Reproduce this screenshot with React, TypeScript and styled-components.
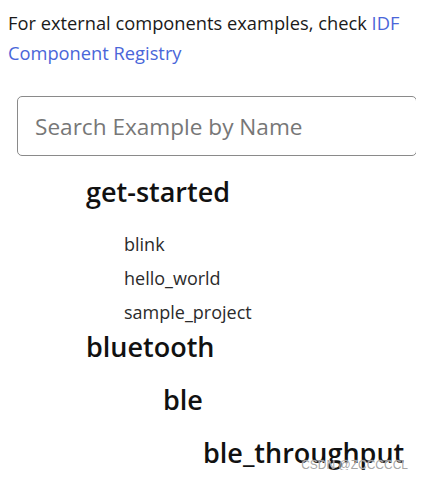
import * as React from 'react';
import styled, { createGlobalStyle } from 'styled-components';

const GlobalStyle = createGlobalStyle`
    html, body {
        margin: 0;
        padding: 0;
        background: #ffffff;
    }
    body {
        margin: 8px;
        font-family: 'Open Sans', 'Noto Sans', sans-serif;
        color: #1a1a1a;
    }
`;

const Page = styled.div`
    position: relative;
    height: 462px;
`;

const Intro = styled.p`
    margin: 0;
    font-size: 18.3px;
    line-height: 30px;
    color: #1a1a1a;
`;

const RegistryLink = styled.a`
    color: #4a66d9;
    text-decoration: none;
`;

const SearchInput = styled.input`
    display: block;
    box-sizing: border-box;
    margin: 28px 0 0 9px;
    width: 400px;
    height: 60px;
    padding: 0 17px;
    border: 1px solid #8a8a8a;
    border-radius: 5px;
    font-family: 'Open Sans', 'Noto Sans', sans-serif;
    font-size: 22.6px;
    color: #333;
    outline: none;

    &::placeholder {
        color: #777;
    }
`;

const Tree = styled.div`
    margin-top: 18px;
`;

const GroupTitle = styled.h3<{ $indent: number }>`
    margin: 0 0 17px;
    padding-left: ${p => p.$indent}px;
    font-size: 27px;
    line-height: 36px;
    font-weight: 600;
    color: #111;
`;

const ExampleList = styled.ul<{ $indent: number }>`
    list-style: none;
    margin: 0;
    padding-left: ${p => p.$indent}px;
`;

const ExampleItem = styled.li`
    font-size: 18px;
    line-height: 34px;
    color: #2b2b2b;
`;

// csdn watermark sitting over the last heading
const Watermark = styled.span`
    position: absolute;
    right: 8px;
    bottom: -2px;
    font-family: 'Liberation Sans', Arial, sans-serif;
    font-size: 12px;
    color: rgba(150, 150, 150, 0.85);
    text-shadow: 0 0 1px #fff;
`;

export default function App() {
    return (
        <Page>
            <GlobalStyle />
            <Intro>
                For external components examples, check <RegistryLink href="#">IDF Component Registry</RegistryLink>
            </Intro>
            <SearchInput placeholder="Search Example by Name" />
            <Tree>
                <GroupTitle $indent={78}>get-started</GroupTitle>
                <ExampleList $indent={116}>
                    <ExampleItem>blink</ExampleItem>
                    <ExampleItem>hello_world</ExampleItem>
                    <ExampleItem>sample_project</ExampleItem>
                </ExampleList>
                <GroupTitle $indent={78}>bluetooth</GroupTitle>
                <GroupTitle $indent={155}>ble</GroupTitle>
                <GroupTitle $indent={195}>ble_throughput</GroupTitle>
            </Tree>
            <Watermark>CSDN @ZCCCCCL</Watermark>
        </Page>
    );
}
